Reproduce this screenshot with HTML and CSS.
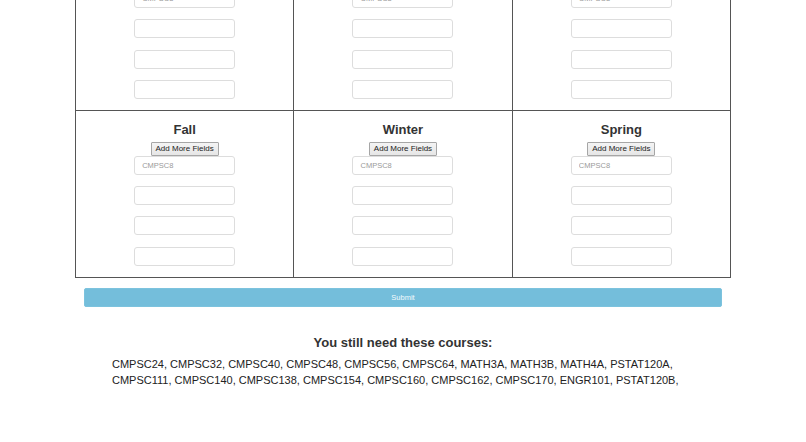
FILE: index.html
```html
<!DOCTYPE html>
<html lang="en">
<head>
<meta charset="utf-8">
<title>Course Planner</title>
<link rel="stylesheet" href="styles.css">
</head>
<body>
<div class="page">
  <div class="quarters">
    <div class="cell">
      <h3 class="term">Fall</h3>
      <button class="add">Add More Fields</button>
      <input class="course" placeholder="CMPSC8">
      <input class="course">
      <input class="course">
      <input class="course">
    </div>
    <div class="cell">
      <h3 class="term">Winter</h3>
      <button class="add">Add More Fields</button>
      <input class="course" placeholder="CMPSC8">
      <input class="course">
      <input class="course">
      <input class="course">
    </div>
    <div class="cell">
      <h3 class="term">Spring</h3>
      <button class="add">Add More Fields</button>
      <input class="course" placeholder="CMPSC8">
      <input class="course">
      <input class="course">
      <input class="course">
    </div>
    <div class="cell">
      <h3 class="term">Fall</h3>
      <button class="add">Add More Fields</button>
      <input class="course" placeholder="CMPSC8">
      <input class="course">
      <input class="course">
      <input class="course">
    </div>
    <div class="cell">
      <h3 class="term">Winter</h3>
      <button class="add">Add More Fields</button>
      <input class="course" placeholder="CMPSC8">
      <input class="course">
      <input class="course">
      <input class="course">
    </div>
    <div class="cell">
      <h3 class="term">Spring</h3>
      <button class="add">Add More Fields</button>
      <input class="course" placeholder="CMPSC8">
      <input class="course">
      <input class="course">
      <input class="course">
    </div>
  </div>
  <button class="submit">Submit</button>
  <section class="needs">
    <h2 class="needs-title">You still need these courses:</h2>
    <p class="needs-list">CMPSC24, CMPSC32, CMPSC40, CMPSC48, CMPSC56, CMPSC64, MATH3A, MATH3B, MATH4A, PSTAT120A, CMPSC111, CMPSC140, CMPSC138, CMPSC154, CMPSC160, CMPSC162, CMPSC170, ENGR101, PSTAT120B,</p>
  </section>
</div>
</body>
</html>
```
FILE: styles.css
```css
html, body {
  margin: 0;
  padding: 0;
  background: #fff;
}
body {
  font-family: "Liberation Sans", Arial, Helvetica, sans-serif;
  color: #333;
  overflow: hidden;
}
.page {
  width: 806px;
}
.quarters {
  display: grid;
  grid-template-columns: repeat(3, 1fr);
  width: 656px;
  box-sizing: border-box;
  margin: -57px auto 0;
  border-left: 1px solid #555;
  border-top: 1px solid #555;
}
.cell {
  display: flex;
  flex-direction: column;
  align-items: center;
  padding: 11px 0 11px;
  border-right: 1px solid #555;
  border-bottom: 1px solid #555;
}
.term {
  margin: 0;
  font-size: 13px;
  line-height: 16px;
  font-weight: bold;
  color: #333;
}
.add {
  margin: 4px 0 0;
  height: 14px;
  padding: 0 4px;
  font-family: "Liberation Sans", Arial, sans-serif;
  font-size: 8px;
  line-height: 12px;
  color: #222;
  background: linear-gradient(#f4f4f4, #e6e6e6);
  border: 1px solid #a6a6a6;
  border-radius: 1px;
}
.course {
  display: block;
  box-sizing: border-box;
  width: 101px;
  height: 19px;
  margin: 11.3px 0 0;
  padding: 0 7px;
  font-family: "Liberation Sans", Arial, sans-serif;
  font-size: 7.5px;
  color: #555;
  background: #fff;
  border: 1px solid #ddd;
  border-radius: 3px;
  outline: none;
}
.add + .course {
  margin-top: 0;
}
.course::placeholder {
  color: #9a9a9a;
}
.submit {
  display: block;
  box-sizing: border-box;
  width: 638px;
  height: 19px;
  margin: 10px auto 0;
  padding: 0;
  font-family: "Liberation Sans", Arial, sans-serif;
  font-size: 7.5px;
  color: #f2fafd;
  background: #74bedb;
  border: 1px solid #7cc3de;
  border-radius: 2px;
}
.needs {
  width: 582px;
  margin: 28px auto 0;
}
.needs-title {
  margin: 0;
  text-align: center;
  font-size: 13px;
  line-height: 16px;
  font-weight: bold;
  color: #333;
}
.needs-list {
  margin: 5px 0 0;
  font-size: 11px;
  line-height: 16px;
  color: #222;
}
```
